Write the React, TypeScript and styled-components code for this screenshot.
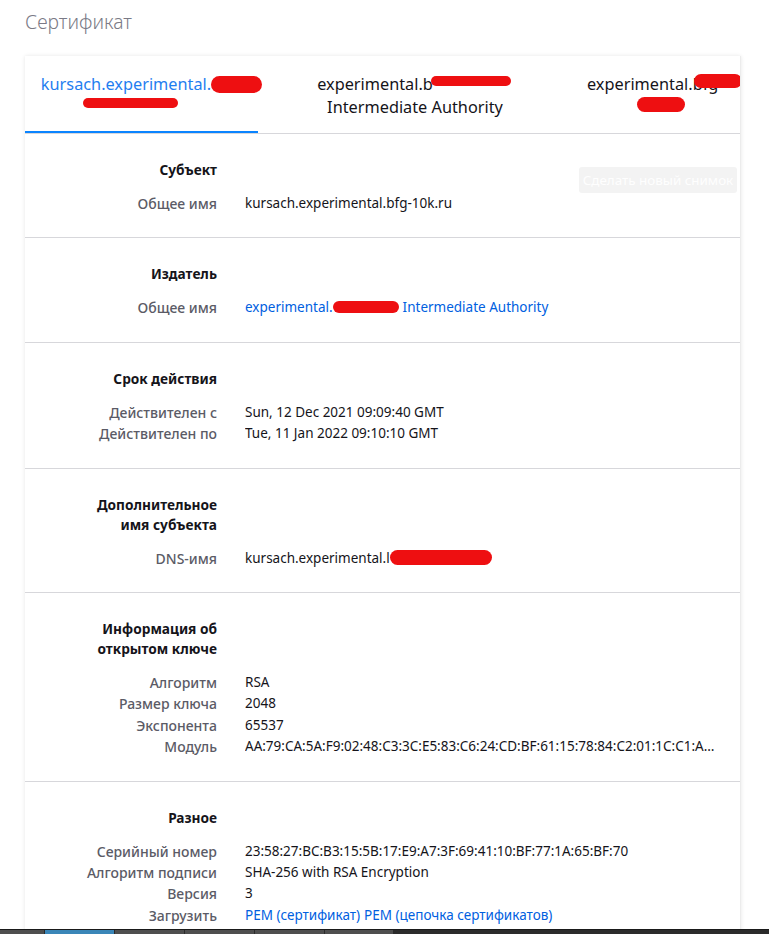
import React from "react";
import styled, { createGlobalStyle } from "styled-components";

const Global = createGlobalStyle`
  html, body { margin: 0; padding: 0; background: #ffffff; }
  body { font-family: "Noto Sans", "Open Sans", sans-serif; color: #15141a; overflow: hidden; }
  #root { height: 934px; overflow: hidden; position: relative; }
`;

const Page = styled.div`
  height: 929px;
  padding: 0 28px 0 25px;
  overflow: hidden;
  position: relative;
`;

const Title = styled.h1`
  margin: 0;
  padding: 9px 0 0 0;
  height: 56px;
  box-sizing: border-box;
  font-size: 19.3px;
  font-weight: 300;
  color: #7a7a86;
  line-height: 26px;
`;

const Card = styled.div`
  background: #fff;
  box-shadow: 0 0 4px rgba(0, 0, 0, 0.1);
  border-right: 1px solid #ececec;
  min-height: 900px;
`;

const Tabs = styled.div`
  display: grid;
  grid-template-columns: 233px 314px 1fr;
  border-bottom: 1px solid #d7d7db;
  height: 77px;
  overflow: hidden;
`;

const Tab = styled.div<{ $active?: boolean; $pad?: number }>`
  display: flex;
  flex-direction: column;
  align-items: center;
  justify-content: flex-start;
  padding-top: 17px;
  padding-left: ${(p) => p.$pad ?? 0}px;
  font-size: 16.3px;
  line-height: 23px;
  color: ${(p) => (p.$active ? "#1f7ef0" : "#15141a")};
  border-bottom: 3px solid ${(p) => (p.$active ? "#0a84ff" : "transparent")};
  margin-bottom: -1px;
  white-space: nowrap;
`;

const TabLine = styled.span`
  display: flex;
  align-items: center;
`;

const Redact = styled.span<{ $w: number; $h: number; $dy?: number; $dx?: number }>`
  display: inline-block;
  width: ${(p) => p.$w}px;
  height: ${(p) => p.$h}px;
  background: #ee0f11;
  border-radius: ${(p) => p.$h / 2}px;
  filter: blur(0.6px);
  position: relative;
  top: ${(p) => p.$dy ?? 0}px;
  left: ${(p) => p.$dx ?? 0}px;
`;

const Section = styled.section<{ $last?: boolean }>`
  padding: 26px 0 23px 0;
  border-bottom: ${(p) => (p.$last ? "none" : "1px solid #d7d7db")};
  display: grid;
  grid-template-columns: 192px 1fr;
  column-gap: 28px;
  font-size: 13.5px;
`;

const Heading = styled.div`
  grid-column: 1;
  text-align: right;
  font-weight: 700;
  font-size: 13.7px;
  line-height: 20px;
  color: #15141a;
  margin-bottom: 13px;
`;

const Label = styled.div`
  grid-column: 1;
  text-align: right;
  color: #5b5b66;
  font-size: 14px;
  line-height: 21.4px;
  font-weight: 500;
  white-space: nowrap;
`;

const Value = styled.div`
  grid-column: 2;
  line-height: 21.4px;
  color: #15141a;
  white-space: nowrap;
  overflow: hidden;
  text-overflow: ellipsis;
  padding-right: 18px;
`;

const Link = styled.a`
  color: #0060df;
  text-decoration: none;
  margin-right: 4px;
`;

const GhostButton = styled.div`
  position: absolute;
  left: 579px;
  top: 167px;
  width: 158px;
  height: 26px;
  border-radius: 3px;
  background: rgba(235, 235, 235, 0.6);
  color: rgba(255, 255, 255, 0.95);
  font-size: 13.4px;
  line-height: 26px;
  text-align: center;
  white-space: nowrap;
`;

const Taskbar = styled.div`
  display: flex;
  height: 5px;
  background: #2b2b2b;
  border-top: 1px solid #1a1a1a;
  box-sizing: border-box;
`;

const TaskItem = styled.div<{ $w: number; $active?: boolean }>`
  width: ${(p) => p.$w}px;
  background: ${(p) => (p.$active ? "#3a86b8" : "#4e4e4e")};
  margin-right: 1px;
`;

type Row = { label: string; value: React.ReactNode };

const Block = ({ heading, rows, last }: { heading: React.ReactNode; rows: Row[]; last?: boolean }) => (
  <Section $last={last}>
    <Heading>{heading}</Heading>
    <div />
    {rows.map((r, i) => (
      <React.Fragment key={i}>
        <Label>{r.label}</Label>
        <Value>{r.value}</Value>
      </React.Fragment>
    ))}
  </Section>
);

export default function App() {
  return (
    <>
      <Global />
      <Page>
        <Title>Сертификат</Title>
        <Card>
          <Tabs>
            <Tab $active $pad={20}>
              <TabLine>
                kursach.experimental.<Redact $w={51} $h={17} />
              </TabLine>
              <TabLine>
                <Redact $w={95} $h={10} $dy={2} $dx={-21} />
              </TabLine>
            </Tab>
            <Tab>
              <TabLine>
                experimental.b<Redact $w={80} $h={10} $dy={-4} $dx={-2} />
              </TabLine>
              <TabLine>Intermediate Authority</TabLine>
            </Tab>
            <Tab $pad={15}>
              <TabLine>
                experimental.bfg<Redact $w={48} $h={14} $dy={-4} $dx={-24} />
              </TabLine>
              <TabLine>
                <Redact $w={48} $h={15} $dy={1} $dx={-16} />
              </TabLine>
            </Tab>
          </Tabs>

          <Block
            heading="Субъект"
            rows={[{ label: "Общее имя", value: "kursach.experimental.bfg-10k.ru" }]}
          />
          <Block
            heading="Издатель"
            rows={[
              {
                label: "Общее имя",
                value: (
                  <>
                    <Link>experimental.</Link>
                    <Redact $w={66} $h={12} style={{ marginLeft: -4, marginRight: 4, top: 1 }} />
                    <Link>Intermediate Authority</Link>
                  </>
                ),
              },
            ]}
          />
          <Block
            heading="Срок действия"
            rows={[
              { label: "Действителен с", value: "Sun, 12 Dec 2021 09:09:40 GMT" },
              { label: "Действителен по", value: "Tue, 11 Jan 2022 09:10:10 GMT" },
            ]}
          />
          <Block
            heading={
              <>
                Дополнительное
                <br />
                имя субъекта
              </>
            }
            rows={[
              {
                label: "DNS-имя",
                value: (
                  <>
                    kursach.experimental.l<Redact $w={102} $h={15} $dy={2} />
                  </>
                ),
              },
            ]}
          />
          <Block
            heading={
              <>
                Информация об
                <br />
                открытом ключе
              </>
            }
            rows={[
              { label: "Алгоритм", value: "RSA" },
              { label: "Размер ключа", value: "2048" },
              { label: "Экспонента", value: "65537" },
              {
                label: "Модуль",
                value: "AA:79:CA:5A:F9:02:48:C3:3C:E5:83:C6:24:CD:BF:61:15:78:84:C2:01:1C:C1:A…",
              },
            ]}
          />
          <Block
            last
            heading="Разное"
            rows={[
              {
                label: "Серийный номер",
                value: "23:58:27:BC:B3:15:5B:17:E9:A7:3F:69:41:10:BF:77:1A:65:BF:70",
              },
              { label: "Алгоритм подписи", value: "SHA-256 with RSA Encryption" },
              { label: "Версия", value: "3" },
              {
                label: "Загрузить",
                value: (
                  <>
                    <Link>PEM (сертификат)</Link>
                    <Link>PEM (цепочка сертификатов)</Link>
                  </>
                ),
              },
            ]}
          />
        </Card>
        <GhostButton>Сделать новый снимок</GhostButton>
      </Page>
      <Taskbar>
        <TaskItem $w={44} />
        <TaskItem $w={69} $active />
        <TaskItem $w={69} />
        <TaskItem $w={69} />
        <TaskItem $w={69} />
        <TaskItem $w={68} />
      </Taskbar>
    </>
  );
}
